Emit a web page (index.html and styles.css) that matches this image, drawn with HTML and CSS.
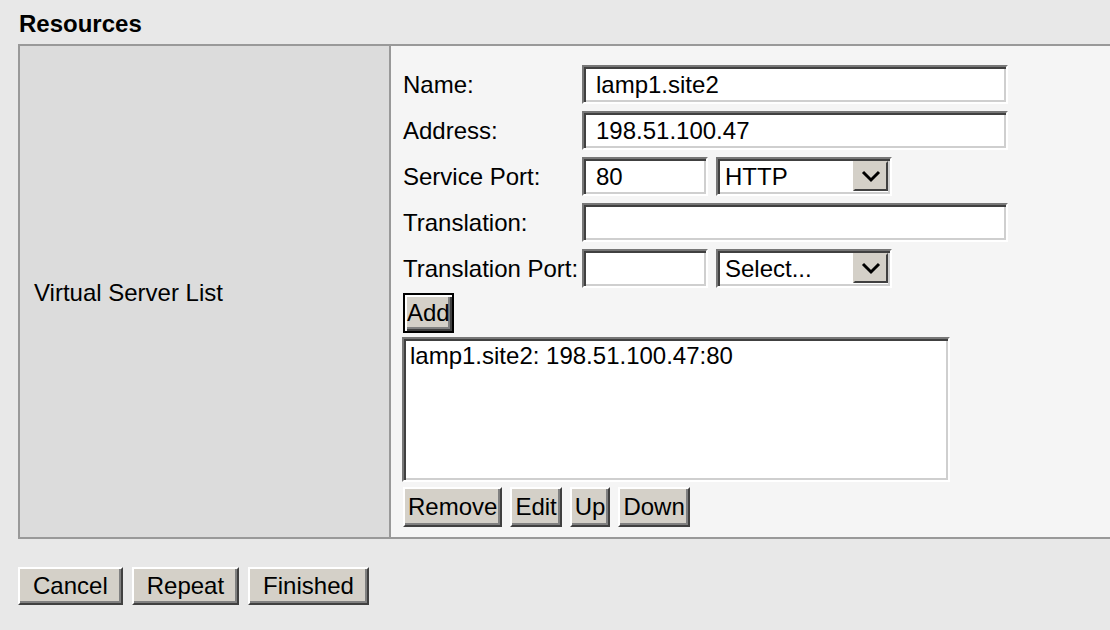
FILE: index.html
```html
<!DOCTYPE html>
<html>
<head>
<meta charset="utf-8">
<link rel="stylesheet" href="styles.css">
</head>
<body>
<div class="page">
  <h2 class="title">Resources</h2>
  <div class="panel">
    <div class="side">Virtual Server List</div>
    <div class="main">
      <div class="row">
        <label class="lbl">Name:</label>
        <div class="field wide">lamp1.site2</div>
      </div>
      <div class="row">
        <label class="lbl">Address:</label>
        <div class="field wide">198.51.100.47</div>
      </div>
      <div class="row">
        <label class="lbl">Service Port:</label>
        <div class="field port">80</div>
        <div class="select"><span class="sel-text">HTTP</span><span class="sel-btn"><svg width="22" height="14" viewBox="0 0 22 14"><path d="M3 3 L11 11 L19 3" fill="none" stroke="#000" stroke-width="3"/></svg></span></div>
      </div>
      <div class="row">
        <label class="lbl">Translation:</label>
        <div class="field wide"></div>
      </div>
      <div class="row">
        <label class="lbl">Translation Port:</label>
        <div class="field port"></div>
        <div class="select"><span class="sel-text">Select...</span><span class="sel-btn"><svg width="22" height="14" viewBox="0 0 22 14"><path d="M3 3 L11 11 L19 3" fill="none" stroke="#000" stroke-width="3"/></svg></span></div>
      </div>
      <div class="btn-row add-row">
        <button class="btn default">Add</button>
      </div>
      <div class="listbox">lamp1.site2: 198.51.100.47:80</div>
      <div class="btn-row list-actions">
        <button class="btn">Remove</button>
        <button class="btn">Edit</button>
        <button class="btn">Up</button>
        <button class="btn">Down</button>
      </div>
    </div>
  </div>
  <div class="footer">
    <button class="btn fbtn">Cancel</button>
    <button class="btn fbtn">Repeat</button>
    <button class="btn fbtn">Finished</button>
  </div>
</div>
</body>
</html>
```
FILE: styles.css
```css
html, body {
  margin: 0;
  padding: 0;
  background: #e8e8e8;
  overflow: hidden;
}
body {
  font-family: "Liberation Sans", Arial, sans-serif;
  font-size: 24px;
  color: #000;
  width: 1110px;
  height: 630px;
}
.page {
  padding-left: 18px;
}
.title {
  margin: 0;
  padding: 10px 0 0 1px;
  height: 44px;
  box-sizing: border-box;
  font-size: 24px;
  font-weight: bold;
  line-height: 27px;
}
.panel {
  display: flex;
  width: 1120px;
  border-top: 2px solid #999;
  border-left: 2px solid #999;
  border-bottom: 2px solid #999;
  background: #f5f5f5;
}
.side {
  width: 371px;
  flex: none;
  background: #dcdcdc;
  border-right: 2px solid #999;
  display: flex;
  align-items: center;
  padding-left: 14px;
  box-sizing: border-box;
  padding-top: 2px;
}
.main {
  flex: 1;
  padding: 19px 0 10px 11px;
  display: flex;
  flex-direction: column;
}
.row {
  display: flex;
  align-items: center;
  height: 39px;
  margin-bottom: 7px;
}
.row:nth-child(5) {
  margin-bottom: 5px;
}
.lbl {
  width: 180px;
  flex: none;
  padding-left: 1px;
  white-space: nowrap;
  box-sizing: border-box;
  line-height: 27px;
}
.field {
  height: 39px;
  box-sizing: border-box;
  background: #fff;
  border: 2px solid;
  border-color: #777 #fff #fff #777;
  box-shadow: inset 2px 2px 0 #404040, inset -2px -2px 0 #cfcfcf;
  padding: 0 0 0 12px;
  display: flex;
  align-items: center;
  line-height: 27px;
  white-space: nowrap;
}
.wide {
  width: 426px;
}
.port {
  width: 126px;
}
.select {
  margin-left: 8px;
  width: 176px;
  height: 39px;
  box-sizing: border-box;
  background: #fff;
  border: 2px solid;
  border-color: #777 #fff #fff #777;
  box-shadow: inset 2px 2px 0 #404040, inset -2px -2px 0 #cfcfcf;
  display: flex;
  align-items: stretch;
  padding: 2px 2px 3px 2px;
}
.sel-text {
  flex: 1;
  padding: 0 0 0 5px;
  line-height: 27px;
  display: flex;
  align-items: center;
}
.sel-btn {
  width: 35px;
  background: #d4d0c8;
  border: 2px solid;
  border-color: #d4d0c8 #404040 #404040 #d4d0c8;
  box-sizing: border-box;
  display: flex;
  align-items: center;
  justify-content: center;
}
.btn-row {
  display: flex;
  gap: 8px;
}
.btn {
  font-family: "Liberation Sans", Arial, sans-serif;
  font-size: 24px;
  color: #000;
  background: #d4d0c8;
  border: 2px solid;
  border-color: #fff #404040 #404040 #fff;
  box-shadow: inset -2px -2px 0 #808080;
  height: 40px;
  padding: 0 3px 2px 3px;
  margin: 0;
  line-height: 27px;
  box-sizing: border-box;
}
.btn.default {
  border: 2px solid #000;
  box-shadow: inset 2px 2px 0 #fff, inset -2px -2px 0 #404040, inset -4px -4px 0 #808080;
  padding: 0 2px 2px 2px;
}
.add-row {
  margin-left: 1px;
  margin-bottom: 4px;
}
.listbox {
  width: 548px;
  height: 145px;
  box-sizing: border-box;
  background: #fff;
  border: 2px solid;
  border-color: #777 #fff #fff #777;
  box-shadow: inset 2px 2px 0 #404040, inset -2px -2px 0 #cfcfcf;
  padding: 3px 6px;
  line-height: 27px;
}
.list-actions {
  margin-top: 5px;
  margin-left: 1px;
}
.footer {
  display: flex;
  gap: 9px;
  margin-top: 28px;
}
.fbtn {
  height: 38px;
  padding: 0 13px 2px 13px;
}
```
